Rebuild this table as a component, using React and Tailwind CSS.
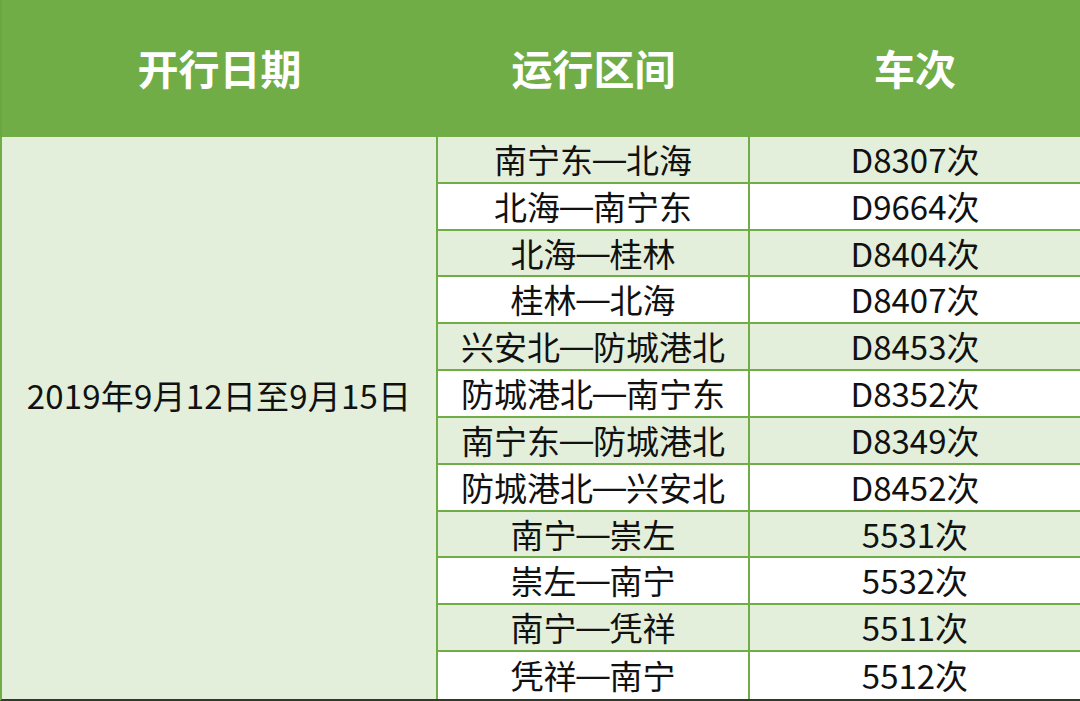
const ROWS = [
  ['南宁东', '北海', 'D8307次'],
  ['北海', '南宁东', 'D9664次'],
  ['北海', '桂林', 'D8404次'],
  ['桂林', '北海', 'D8407次'],
  ['兴安北', '防城港北', 'D8453次'],
  ['防城港北', '南宁东', 'D8352次'],
  ['南宁东', '防城港北', 'D8349次'],
  ['防城港北', '兴安北', 'D8452次'],
  ['南宁', '崇左', '5531次'],
  ['崇左', '南宁', '5532次'],
  ['南宁', '凭祥', '5511次'],
  ['凭祥', '南宁', '5512次'],
]

const font = { fontFamily: '"Noto Sans CJK SC", "Noto Sans", sans-serif' }

export default function App() {
  return (
    <div className="w-[1080px] h-[701px] overflow-hidden bg-white text-[#111]" style={font}>
      {/* header */}
      <div className="h-[137px] bg-[#70ad47] flex text-white font-bold text-[41px] border-l-2 border-[#6aa641]">
        <div className="w-[435px] flex items-center justify-center pb-[2px]">开行日期</div>
        <div className="w-[313px] flex items-center justify-center pb-[2px]">运行区间</div>
        <div className="flex-1 flex items-center justify-center pb-[2px]">车次</div>
      </div>

      {/* body */}
      <div className="flex h-[564px] border-l-2 border-b-2 border-[#70ad47] border-b-[#2f3a2a]">
        <div className="w-[436px] bg-[#e3efda] border-r-2 border-[#70ad47] flex items-center justify-center pb-[46px] text-[33px] leading-none tracking-[0.2px]">
          2019年9月12日至9月15日
        </div>
        <div className="flex-1 grid grid-rows-[repeat(12,1fr)]">
          {ROWS.map(([from, to, train], i) => (
            <div
              key={train}
              className={`flex text-[33px] leading-none ${i % 2 === 0 ? 'bg-[#e3efda]' : 'bg-white'} ${i < ROWS.length - 1 ? 'border-b-2 border-[#70ad47]' : ''}`}
            >
              <div className="w-[312px] border-r-2 border-[#70ad47] flex items-center justify-center">
                {from}
                <span className="relative -top-[1px] font-['Liberation_Sans']">—</span>
                {to}
              </div>
              <div className="flex-1 flex items-center justify-center">{train}</div>
            </div>
          ))}
        </div>
      </div>
    </div>
  )
}
